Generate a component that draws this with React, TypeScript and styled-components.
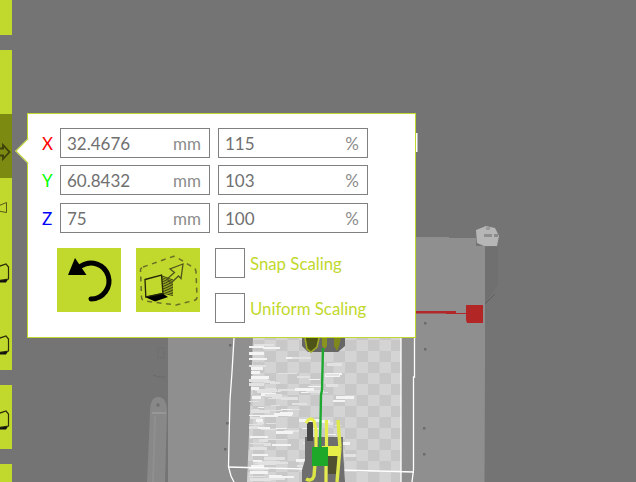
import React from "react";
import styled, { createGlobalStyle } from "styled-components";

const LIME = "#c1d82c";

const Global = createGlobalStyle`
  html, body { margin: 0; padding: 0; background: #747474; }
  body { font-family: Lato, "Open Sans", sans-serif; }
`;

const Stage = styled.div`
  position: relative;
  width: 636px;
  height: 482px;
  overflow: hidden;
  background: #747474;
`;

const SceneSvg = styled.svg`
  position: absolute;
  left: 0;
  top: 0;
`;

const Sidebar = styled.nav`
  position: relative;
  width: 12px;
  height: 482px;
  display: flex;
  flex-direction: column;
`;

const Segment = styled.div<{ $h: number; $gap?: number; $active?: boolean; $shift?: number }>`
  height: ${(p) => p.$h}px;
  box-sizing: border-box;
  margin-bottom: ${(p) => p.$gap ?? 0}px;
  padding-top: ${(p) => Math.max((p.$shift ?? 0) * 2, 0)}px;
  padding-bottom: ${(p) => Math.max(-(p.$shift ?? 0) * 2, 0)}px;
  background: ${(p) => (p.$active ? "#7d8a12" : LIME)};
  display: flex;
  align-items: center;
  overflow: hidden;
  flex: none;
`;

const Panel = styled.section`
  position: absolute;
  left: 27px;
  top: 113px;
  width: 389px;
  height: 225px;
  box-sizing: border-box;
  background: #fff;
  border: 1px solid ${LIME};
  padding: 14px 0 0 32px;
`;

const Pointer = styled.div`
  position: absolute;
  left: -9px;
  top: 28px;
  width: 18px;
  height: 18px;
  box-sizing: border-box;
  background: #fff;
  border-left: 1px solid ${LIME};
  border-bottom: 1px solid ${LIME};
  transform: rotate(45deg);
`;

const Row = styled.div<{ $top: number }>`
  position: relative;
  display: flex;
  gap: 8px;
  margin-top: ${(p) => p.$top}px;
`;

const Axis = styled.span<{ $color: string }>`
  position: absolute;
  left: -18px;
  width: 10px;
  top: 1px;
  line-height: 30px;
  font-size: 17px;
  text-align: center;
  color: ${(p) => p.$color};
`;

const Field = styled.div`
  width: 150px;
  height: 30px;
  box-sizing: border-box;
  border: 1px solid #808080;
  padding: 2px 8px 0 6px;
  display: flex;
  justify-content: space-between;
  align-items: center;
  font-size: 17px;
  line-height: 26px;
`;

const Value = styled.span`
  color: #707070;
`;

const Unit = styled.span`
  color: #8c8c8c;
`;

const Bottom = styled.div`
  display: flex;
  margin: 15px 0 0 -3px;
`;

const ActionButton = styled.button`
  width: 64px;
  height: 64px;
  padding: 0;
  border: 0;
  background: ${LIME};
  margin-right: 15px;
  display: block;
  flex: none;
`;

const Options = styled.div`
  display: flex;
  flex-direction: column;
  gap: 15px;
`;

const Option = styled.label`
  display: flex;
  align-items: center;
  gap: 5px;
  height: 30px;
  color: ${LIME};
  font-size: 16.8px;
`;

const OptionText = styled.span`
  line-height: 28px;
  padding-top: 1px;
`;

const Check = styled.span`
  width: 30px;
  height: 30px;
  box-sizing: border-box;
  border: 1px solid #808080;
  background: #fff;
  flex: none;
`;

const NavIcon = ({ kind }: { kind: "arrow" | "flag" | "cube" }) => (
  <svg width="12" height="24" viewBox="0 0 12 24" style={{ flex: "none" }}>
    {kind === "arrow" && (
      <path d="M-3 8.5H3V5L9.5 12L3 19V15.5H-3Z" fill="none" stroke="#3c4208" strokeWidth="1.8" />
    )}
    {kind === "flag" && <path d="M-2 10L6.5 6.5V16.5L-2 15" fill="none" stroke="#55591c" strokeWidth="1" />}
    {kind === "cube" && (
      <>
        <path d="M-3 5L6 2L8.5 5V17L-3 19Z" fill="none" stroke="#2a2d08" strokeWidth="1.2" />
        <path d="M-3 19L8 17.5L6 20.5H-3Z" fill="#111" />
      </>
    )}
  </svg>
);

const ResetIcon = () => (
  <svg width="64" height="64" viewBox="0 0 64 64">
    <path d="M24 18A18 18 0 1 1 34 51" fill="none" stroke="#000" strokeWidth="5" strokeLinecap="round" />
    <path d="M18 10L11 27L29.5 27Z" fill="#000" />
  </svg>
);

const hatch = Array.from({ length: 11 }, (_, i) => 28 + i * 1.7);

const ScaleIcon = () => (
  <svg width="64" height="64" viewBox="0 0 64 64">
    <path
      d="M7 19L37 8.5Q39 8 41 9.5L58 20Q60 21 60 24L61 49Q61 52 58 52.5L40 57L9 53Q5.5 52.5 5.5 49L4.5 22Q4.5 20 7 19Z"
      fill="none"
      stroke="#6b7026"
      strokeWidth="1.5"
      strokeDasharray="5 4.5"
    />
    <path d="M9 49L26 45L32 49L19 53.5Z" fill="#000" />
    <path d="M9 31.5L25.5 27L27 45.5L9.8 49Z" fill="none" stroke="#23260a" strokeWidth="1.3" />
    {hatch.map((y, i) => (
      <line key={i} x1="26" y1={y} x2="37" y2={y + 4 - i * 0.15} stroke="#2c300c" strokeWidth="0.9" />
    ))}
    <path d="M47 16L34 21L38.5 24.5L31 31L35 35L42.5 28L45 30.5Z" fill="none" stroke="#50541e" strokeWidth="1.3" />
  </svg>
);

const noise = (n: number) => {
  const v = Math.sin(n * 12.9898) * 43758.5453;
  return v - Math.floor(v);
};

const streaks = Array.from({ length: 110 }, (_, i) => {
  const spread = noise(i + 1);
  return {
    x: 249 + Math.floor(spread * spread * 90),
    y: 342 + Math.floor(noise(i + 200) * 138),
    w: 6 + Math.floor(noise(i + 400) * 16),
    h: 1 + Math.floor(noise(i + 600) * 3),
    light: noise(i + 800) > 0.45,
  };
});

const Scene = () => (
  <SceneSvg width="636" height="482" viewBox="0 0 636 482" aria-hidden="true">
    <defs>
      <pattern id="checker" width="23" height="22" patternUnits="userSpaceOnUse" x="253" y="340">
        <rect width="23" height="22" fill="#d4d4d4" />
        <rect width="11.5" height="11" fill="#c8c8c8" />
        <rect x="11.5" y="11" width="11.5" height="11" fill="#c8c8c8" />
      </pattern>
    </defs>
    <path d="M416 237H449V238H476V246H485V367L484.5 482H168V420L168 338H416Z" fill="#8f8f8f" />
    <path d="M485 247H498V285L485 304Z" fill="#707070" />
    <line x1="495" y1="294" x2="485" y2="304" stroke="#5e5e5e" />
    <path d="M476 230L486 226L495 228L499 236L497 246H484L477 243Z" fill="#b6b6b6" />
    <rect x="484" y="234" width="8" height="3" fill="#8f8f8f" />
    <rect x="494" y="234" width="4" height="3" fill="#8a8a8a" />
    <rect x="486" y="227" width="4" height="3" fill="#9a9a9a" />

    <path d="M147 482L150 412Q150 397 158 397Q167 397 167 412L165 482Z" fill="#888" />
    <rect x="152" y="412" width="14" height="2" fill="#979797" />
    <line x1="155" y1="416" x2="153" y2="482" stroke="#8f8f8f" strokeWidth="2" />
    <circle cx="158" cy="405" r="1.8" fill="#707070" />
    <path d="M153 375Q158 378 165 377" fill="none" stroke="#6a6a6a" />
    <path d="M158 348H164V358H158Z" fill="none" stroke="#6e6e6e" />

    <path d="M253 338H401V482H247Z" fill="url(#checker)" />
    {streaks.map((s, i) => (
      <rect key={i} x={s.x} y={s.y} width={s.w} height={s.h} fill={s.light ? "#f4f4f4" : "#e2e2e2"} />
    ))}

    <g fill="none" stroke="#fff" strokeWidth="1.3">
      <path d="M234 338L232 372L230 400L229 440L228.5 467L231 476L234 482" />
      <path d="M414.5 338V377H413.5V470L412 482" />
      <path d="M401 338V482" />
      <path d="M228 467L414 472" />
    </g>
    {[[229, 344], [226, 422], [224, 448], [424, 322], [424, 348], [423, 427], [423, 453]].map(([x, y], i) => (
      <rect key={i} x={x} y={y} width="2.5" height="2.5" fill="#6c6c6c" />
    ))}

    <path d="M416 311H456V313H475V314H446V313.5H416Z" fill="#b22828" />
    <path d="M466 305H483V323H467L466 320Z" fill="#b32626" />

    <rect x="416" y="133" width="1.5" height="19" fill="#fff" />

    <path d="M302 338H345V346L338 352H308L302 346Z" fill="#666" />
    <path d="M305 338L307 349L311 352L317 347L319 338" fill="#4e5318" stroke="#a2ab25" strokeWidth="1.5" />
    <path d="M322 338H327V346L325 349L322 346Z" fill="#8a931e" />
    <path d="M334 338H341L339 346L337 351L334 346Z" fill="#7f881c" />

    <path d="M305 437H343V450L345 482H302V470L305 460Z" fill="#6e6e6e" />
    <rect x="328" y="454" width="10" height="20" fill="#4e5030" />
    <rect x="307" y="422" width="6" height="19" fill="#444" />
    <path d="M306 423Q310 416 314 421L316 430V450" fill="none" stroke="#e9f04e" strokeWidth="3.2" />
    <path d="M315 464L314 476Q312 482 306 479" fill="none" stroke="#dbe644" strokeWidth="3.4" />
    <path d="M326.5 420V446M326 466V482" fill="none" stroke="#e4ec50" strokeWidth="3.2" />
    <path d="M338 420L340 447M340 447L337 482" fill="none" stroke="#dfe84a" strokeWidth="3.4" />
    <rect x="322" y="446" width="18" height="10" fill="#e6ef48" />
    <path d="M323 348L322 390L321 395L320 448" fill="none" stroke="#1ea832" strokeWidth="2.4" />
    <rect x="312" y="447" width="16" height="19" fill="#1ea82a" />
  </SceneSvg>
);

const rows = [
  { axis: "X", color: "#ff0000", mm: "32.4676", pct: "115", top: 0 },
  { axis: "Y", color: "#00ff00", mm: "60.8432", pct: "103", top: 7 },
  { axis: "Z", color: "#0000ff", mm: "75", pct: "100", top: 8 },
];

export default function App() {
  return (
    <Stage>
      <Global />
      <Scene />
      <Sidebar>
        <Segment $h={35} $gap={15} />
        <Segment $h={64} />
        <Segment $h={64} $active $shift={6}>
          <NavIcon kind="arrow" />
        </Segment>
        <Segment $h={64} $shift={-2}>
          <NavIcon kind="flag" />
        </Segment>
        <Segment $h={64}>
          <NavIcon kind="cube" />
        </Segment>
        <Segment $h={64} $gap={15} $shift={8}>
          <NavIcon kind="cube" />
        </Segment>
        <Segment $h={64} $gap={15} $shift={4}>
          <NavIcon kind="cube" />
        </Segment>
        <Segment $h={18} />
      </Sidebar>
      <Panel>
        <Pointer />
        {rows.map((r) => (
          <Row key={r.axis} $top={r.top}>
            <Axis $color={r.color}>{r.axis}</Axis>
            <Field>
              <Value>{r.mm}</Value>
              <Unit>mm</Unit>
            </Field>
            <Field>
              <Value>{r.pct}</Value>
              <Unit>%</Unit>
            </Field>
          </Row>
        ))}
        <Bottom>
          <ActionButton aria-label="Reset">
            <ResetIcon />
          </ActionButton>
          <ActionButton aria-label="Scale to fit">
            <ScaleIcon />
          </ActionButton>
          <Options>
            <Option>
              <Check />
              <OptionText>Snap Scaling</OptionText>
            </Option>
            <Option>
              <Check />
              <OptionText>Uniform Scaling</OptionText>
            </Option>
          </Options>
        </Bottom>
      </Panel>
    </Stage>
  );
}
